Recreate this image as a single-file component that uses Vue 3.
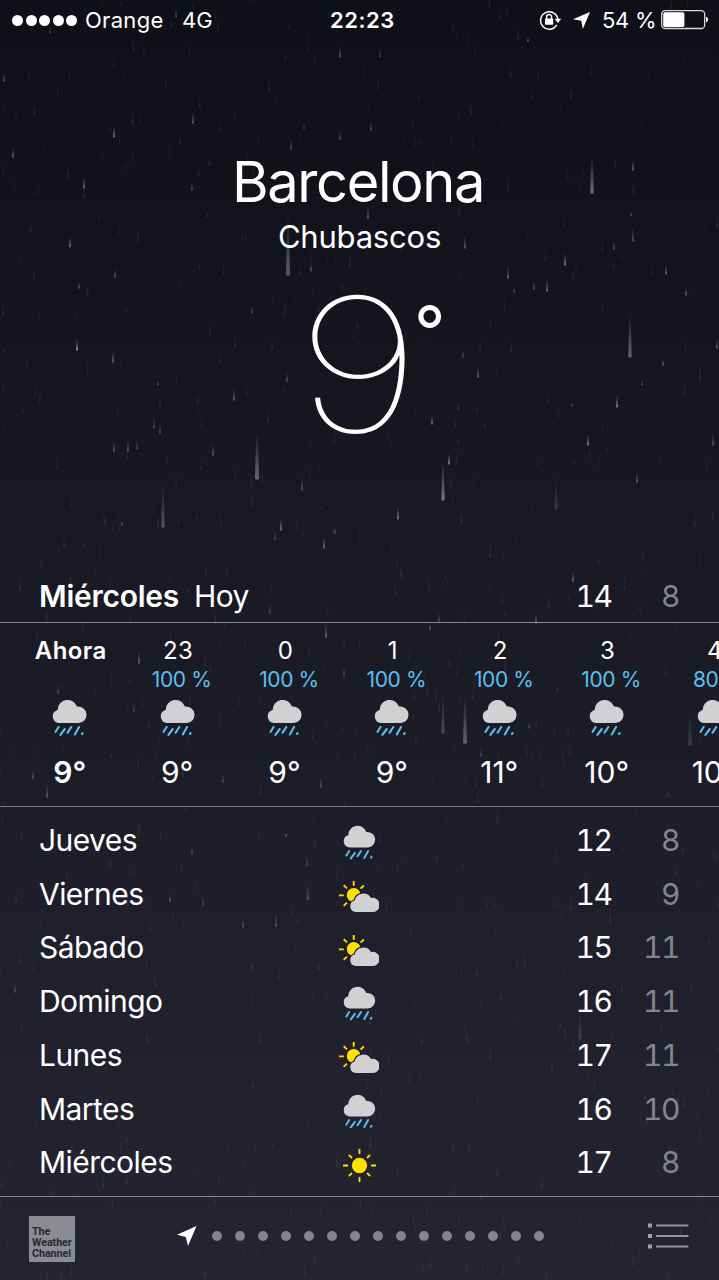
<script setup>
const hours = [
  { label: 'Ahora', rain: '', temp: '9', now: true },
  { label: '23', rain: '100 %', temp: '9' },
  { label: '0', rain: '100 %', temp: '9' },
  { label: '1', rain: '100 %', temp: '9' },
  { label: '2', rain: '100 %', temp: '11' },
  { label: '3', rain: '100 %', temp: '10' },
  { label: '4', rain: '80 %', temp: '10' },
]

const days = [
  { name: 'Jueves', icon: 'rain', high: 12, low: 8 },
  { name: 'Viernes', icon: 'partly', high: 14, low: 9 },
  { name: 'Sábado', icon: 'partly', high: 15, low: 11 },
  { name: 'Domingo', icon: 'rain', high: 16, low: 11 },
  { name: 'Lunes', icon: 'partly', high: 17, low: 11 },
  { name: 'Martes', icon: 'rain', high: 16, low: 10 },
  { name: 'Miércoles', icon: 'sun', high: 17, low: 8 },
]

// Foreground drops: x, bottom y, length, width, opacity
const nearDrops = [
  [288, 276, 62, 4.4, 0.32], [257, 480, 48, 4.6, 0.36], [163, 528, 44, 3.8, 0.26],
  [592, 194, 40, 3.8, 0.42], [630, 358, 46, 3.8, 0.36], [443, 501, 40, 3.8, 0.42],
  [556, 510, 34, 3.4, 0.16], [465, 744, 50, 4.4, 0.32], [443, 734, 42, 3.4, 0.22],
  [690, 746, 34, 4.4, 0.14], [580, 1040, 30, 4, 0.14],
  [340, 58, 14, 1.6, 0.4], [4, 82, 10, 1.5, 0.4], [193, 124, 12, 1.6, 0.5],
  [114, 138, 13, 1.7, 0.6], [13, 158, 11, 1.7, 0.5], [84, 189, 13, 1.7, 0.5],
  [192, 191, 9, 1.5, 0.4], [70, 248, 13, 1.7, 0.5], [115, 278, 10, 1.6, 0.4],
  [79, 289, 8, 1.6, 0.45], [77, 351, 13, 2, 0.6], [113, 363, 14, 1.6, 0.5],
  [234, 401, 14, 1.6, 0.45], [158, 386, 7, 1.4, 0.4], [287, 382, 10, 1.6, 0.4],
  [154, 429, 14, 1.5, 0.35], [160, 434, 12, 1.5, 0.35], [114, 452, 12, 1.7, 0.4],
  [128, 452, 12, 1.7, 0.4], [137, 450, 12, 1.5, 0.3], [213, 456, 13, 1.5, 0.4],
  [302, 491, 14, 1.6, 0.4], [122, 526, 7, 1.5, 0.4], [281, 531, 14, 1.7, 0.55],
  [324, 549, 14, 1.7, 0.5], [335, 534, 7, 1.5, 0.4], [275, 541, 12, 1.4, 0.3],
  [340, 140, 9, 1.6, 0.4], [291, 150, 12, 1.6, 0.35], [311, 272, 11, 1.7, 0.4],
  [252, 314, 10, 1.4, 0.35], [304, 130, 12, 1.4, 0.25],
  [380, 58, 12, 1.5, 0.3], [528, 42, 5, 1.6, 0.55], [371, 131, 10, 1.5, 0.4],
  [633, 171, 12, 1.7, 0.5], [368, 219, 14, 1.8, 0.4], [465, 249, 16, 1.6, 0.4],
  [633, 242, 17, 1.5, 0.4], [631, 216, 4, 1.6, 0.5], [614, 250, 11, 1.6, 0.35],
  [565, 266, 14, 1.8, 0.55], [508, 279, 13, 1.6, 0.5], [534, 290, 10, 1.6, 0.4],
  [547, 292, 15, 1.8, 0.45], [514, 293, 7, 1.7, 0.35], [666, 275, 11, 1.7, 0.5],
  [686, 296, 9, 1.6, 0.5], [663, 366, 8, 1.8, 0.4], [717, 349, 11, 1.7, 0.4],
  [478, 378, 12, 1.7, 0.45], [463, 358, 9, 1.5, 0.35], [617, 408, 14, 1.8, 0.6],
  [432, 425, 11, 1.8, 0.5], [588, 446, 12, 1.8, 0.6], [713, 446, 14, 1.6, 0.4],
  [449, 465, 12, 1.8, 0.6], [637, 483, 11, 1.6, 0.45], [398, 520, 14, 1.8, 0.55],
  [642, 386, 7, 1.5, 0.35], [572, 407, 6, 1.6, 0.35], [458, 410, 7, 1.4, 0.3],
  [176, 18, 12, 1.6, 0.3], [50, 34, 9, 1.5, 0.3], [139, 664, 13, 1.6, 0.5],
  [58, 694, 11, 1.6, 0.3], [326, 638, 16, 1.6, 0.5], [344, 676, 10, 1.5, 0.35],
  [134, 712, 9, 1.6, 0.3], [33, 779, 9, 1.6, 0.4], [47, 798, 15, 1.7, 0.4],
  [321, 788, 12, 1.6, 0.35], [223, 783, 10, 1.5, 0.3], [430, 630, 7, 1.6, 0.5],
  [536, 624, 10, 1.6, 0.6], [439, 622, 10, 1.6, 0.3], [573, 582, 12, 1.7, 0.5],
  [270, 614, 12, 1.5, 0.3], [529, 729, 7, 1.6, 0.3], [481, 757, 10, 1.5, 0.3],
  [170, 902, 9, 1.8, 0.35], [243, 928, 10, 1.8, 0.35], [276, 927, 14, 1.6, 0.35],
  [308, 900, 14, 1.8, 0.35], [286, 837, 5, 1.6, 0.5], [192, 855, 10, 1.5, 0.3],
  [307, 867, 14, 1.6, 0.25], [15, 993, 12, 1.5, 0.3], [203, 907, 14, 1.8, 0.2],
]

// Deterministic generator for the faint background rain
let seed = 48271
const random = () => {
  seed = (seed * 16807) % 2147483647
  return seed / 2147483647
}
const farDrops = Array.from({ length: 620 }, () => [
  random() * 719,
  random() * 1290,
  9 + random() * 8,
  1.6 + random() * 0.8,
  0.04 + random() * 0.06,
])

const drops = [...farDrops, ...nearDrops].map(([x, y, len, w, opacity]) => {
  const top = w * 0.18
  const bottom = w * 0.45
  return {
    d: `M${x - top} ${y - len}H${x + top}L${x + bottom} ${y - 1}Q${x} ${y + 0.6} ${x - bottom} ${y - 1}Z`,
    opacity,
  }
})
</script>

<template>
  <main class="screen">
    <svg class="sky" viewBox="0 0 719 1280" aria-hidden="true">
      <defs>
        <linearGradient id="drop" x1="0" y1="0" x2="0" y2="1">
          <stop offset="0" stop-color="#dfe3f0" stop-opacity="0" />
          <stop offset="0.75" stop-color="#eceef6" stop-opacity="0.8" />
          <stop offset="1" stop-color="#eceef6" />
        </linearGradient>
        <g id="rain-shape">
          <path
            fill="#d1d1d3"
            d="M6.9 24.1A6.7 6.7 0 0 1 5.6 11A10 10 0 0 1 25 7.5A8.35 8.35 0 1 1 26.7 24.1Z"
          />
          <path
            fill="none"
            stroke="#5ac0f0"
            stroke-width="2.1"
            stroke-linecap="round"
            d="M6.6 28L3.6 32.8M12.8 30L8.4 35.8M19.3 28L15.6 33.6M27 28L22.8 35.4M30.6 34.2L30 35"
          />
        </g>
      </defs>
      <path v-for="(drop, i) in drops" :key="i" :d="drop.d" :opacity="drop.opacity" fill="url(#drop)" />
    </svg>

    <header class="status">
      <div class="signal"><i v-for="n in 5" :key="n"></i></div>
      <span class="carrier">Orange</span>
      <span class="network">4G</span>
      <span class="clock">22:23</span>
      <svg class="lock" viewBox="0 0 23 20">
        <path d="M17.8 14.9A8.7 8.7 0 1 1 18.9 9.2" fill="none" stroke="#fff" stroke-width="1.5" />
        <path d="M15.6 8.8h6.6l-3.3 4.2z" fill="#fff" />
        <rect x="6" y="8.6" width="8.2" height="6.2" rx="0.8" fill="#fff" />
        <path d="M7.6 9V7a2.5 2.5 0 0 1 5 0v2" fill="none" stroke="#fff" stroke-width="1.4" />
      </svg>
      <svg class="locate" viewBox="0 0 17 17"><path d="M17 0L9.8 17L8.3 8.7L0 7.2Z" fill="#fff" /></svg>
      <span class="percent">54 %</span>
      <svg class="battery" viewBox="0 0 48 20">
        <rect x="0.7" y="0.7" width="43" height="17.8" rx="3.5" fill="none" stroke="#d8d8dc" stroke-width="1.3" />
        <rect x="2.2" y="2.2" width="21.2" height="14.8" rx="1.8" fill="#fff" />
        <path d="M45 6.5a3.2 3.2 0 0 1 0 6z" fill="#fff" />
      </svg>
    </header>

    <section class="current">
      <h1>Barcelona</h1>
      <p class="condition">Chubascos</p>
      <div class="temperature"><span class="digit">9</span><span class="degree">°</span></div>
    </section>

    <section class="today">
      <strong>Miércoles</strong>
      <span class="hoy">Hoy</span>
      <span class="high">14</span>
      <span class="low">8</span>
    </section>

    <section class="hours">
      <div v-for="hour in hours" :key="hour.label" class="hour" :class="{ now: hour.now }">
        <span class="time">{{ hour.label }}</span>
        <span class="chance">{{ hour.rain }}</span>
        <svg class="hour-icon" viewBox="0 0 35 37"><use href="#rain-shape" /></svg>
        <span class="temp">{{ hour.temp }}°</span>
      </div>
    </section>

    <section class="days">
      <div v-for="day in days" :key="day.name" class="day">
        <span class="name">{{ day.name }}</span>
        <span class="icon">
          <svg v-if="day.icon === 'rain'" class="rain" width="32.6" height="34.5" viewBox="0 0 35 37"><use href="#rain-shape" /></svg>
          <svg v-else-if="day.icon === 'partly'" width="40" height="31" viewBox="0 0 40 31">
            <g stroke="#ffe000" stroke-width="1.9" fill="none">
              <path d="M14.7 0v4.8M0 14.4h4.8M4.7 4.2L7.9 7.4M24.8 4.5L21.6 7.7M4.7 24.8L7.9 21.6" />
            </g>
            <circle cx="14.7" cy="14" r="6.9" fill="#ffe000" />
            <path
              fill="#d1d1d3"
              stroke="#1e1e29"
              stroke-width="2.4"
              paint-order="stroke"
              d="M16.8 31A5.8 5.8 0 0 1 15.6 19.6A8.9 8.9 0 0 1 32 17A7.1 7.1 0 1 1 33 31Z"
            />
          </svg>
          <svg v-else width="33" height="33" viewBox="0 0 33 33">
            <circle cx="16.5" cy="16.5" r="7.7" fill="#ffe000" />
            <path
              stroke="#ffe000"
              stroke-width="1.8"
              d="M16.5 0v5M16.5 28v5M0 16.5h5M28 16.5h5M5.8 5.8L9 9M24 24L27.2 27.2M27.2 5.8L24 9M9 24L5.8 27.2"
            />
          </svg>
        </span>
        <span class="high">{{ day.high }}</span>
        <span class="low">{{ day.low }}</span>
      </div>
    </section>

    <footer class="footer">
      <div class="logo">The<br />Weather<br />Channel</div>
      <div class="pages">
        <svg viewBox="0 0 20 20"><path d="M19.5 0L11 20L8.8 11L0 8.7Z" fill="#fff" /></svg>
        <i v-for="n in 15" :key="n"></i>
      </div>
      <svg class="list" viewBox="0 0 41 26">
        <path d="M0 2.5h4M0 13h4M0 23.5h4" stroke="#a0a0a8" stroke-width="4" />
        <path d="M8 2.5h32.5M8 13h32.5M8 23.5h32.5" stroke="#92929b" stroke-width="2" />
      </svg>
    </footer>
  </main>
</template>

<style>
html,
body {
  margin: 0;
  background: #101019;
}
</style>

<style scoped>
.screen {
  position: relative;
  display: flex;
  flex-direction: column;
  width: 719px;
  height: 1280px;
  overflow: hidden;
  color: #fff;
  font-family: Inter, "Liberation Sans", sans-serif;
  font-weight: 400;
  white-space: nowrap;
  background: linear-gradient(#0f0f18 0, #14141e 300px, #1a1a24 620px, #1d1e29 860px, #242530 1280px);
}
.screen > * {
  position: relative;
  box-sizing: border-box;
  flex: none;
}
.screen > .sky {
  position: absolute;
  inset: 0;
  width: 719px;
  height: 1280px;
}
.status {
  display: grid;
  grid-template-columns: 73px 97px 148px 209px 34px 29px 59px 48px;
  align-items: center;
  height: 40px;
  padding-left: 12px;
  font-size: 22px;
}
.signal {
  display: flex;
  gap: 2.5px;
}
.signal i {
  width: 11px;
  height: 11px;
  border-radius: 50%;
  background: #fff;
}
.carrier {
  letter-spacing: 0.3px;
}
.percent {
  letter-spacing: -0.25px;
}
.clock {
  font-weight: 600;
  letter-spacing: 0.5px;
}
.lock {
  width: 23px;
  height: 20px;
}
.locate {
  width: 17px;
  height: 17px;
}
.battery {
  width: 48px;
  height: 20px;
}
.current {
  height: 535px;
  text-align: center;
}
h1 {
  margin: 107px 3px 0 0;
  font-size: 56px;
  line-height: 70px;
  font-weight: 400;
  letter-spacing: -1.4px;
}
.condition {
  margin: 0;
  line-height: 39px;
  font-size: 31px;
  letter-spacing: -0.2px;
}
.temperature {
  display: flex;
  height: 200px;
  padding-left: 303px;
}
.digit {
  width: 111px;
  font-size: 190px;
  line-height: 218px;
  font-weight: 125;
  transform: scale(1.155, 0.98);
}
.degree {
  font-size: 69px;
  line-height: 150px;
}
.today {
  display: flex;
  align-items: center;
  height: 48px;
  padding: 0 38px 6px 39px;
  font-size: 30px;
  border-bottom: 1px solid #868690;
}
.today strong {
  width: 155px;
  font-weight: 600;
  letter-spacing: -0.25px;
}
.hoy {
  letter-spacing: -0.6px;
}
.high,
.low {
  font-variant-numeric: tabular-nums;
  letter-spacing: -1.5px;
}
.high {
  margin-left: auto;
  padding-right: 1.5px;
}
.low {
  width: 68px;
  box-sizing: border-box;
  padding-right: 2px;
  text-align: right;
  color: #85858d;
}
.hours {
  display: flex;
  height: 184px;
  padding-left: 16px;
  border-bottom: 1px solid #74747e;
  overflow: hidden;
}
.hour {
  display: flex;
  flex: none;
  flex-direction: column;
  align-items: center;
  width: 107.4px;
  padding-top: 13px;
  box-sizing: border-box;
}
.time {
  padding-left: 2px;
  font-size: 24px;
  line-height: 30px;
  letter-spacing: 0.4px;
}
.chance {
  height: 28px;
  padding-left: 9px;
  font-size: 21px;
  line-height: 28px;
  letter-spacing: -0.4px;
  color: #5ac0f0;
}
.hour-icon {
  width: 35px;
  height: 37px;
  margin-top: 5px;
}
.temp {
  margin-top: 16px;
  font-size: 30px;
  line-height: 40px;
}
.now .time,
.now .temp {
  font-weight: 600;
}
.days {
  height: 389px;
  padding: 6px 38px 0 39px;
}
.day {
  display: grid;
  grid-template-columns: 300px 40px 234px 68px;
  align-items: center;
  height: 53.75px;
  font-size: 30px;
}
.name {
  letter-spacing: -0.55px;
}
.day .icon {
  display: flex;
  justify-content: center;
  padding-top: 6px;
}
.rain {
  margin: -1px 0 0 1px;
}
.day .high {
  text-align: right;
}
.footer {
  display: flex;
  height: 84px;
  padding: 19px 30px 0 29px;
  border-top: 1px solid #868690;
}
.logo {
  width: 46px;
  height: 46px;
  padding: 11px 0 0 3px;
  box-sizing: border-box;
  background: #8b8b92;
  color: #262733;
  font: 700 10.8px/10.8px Roboto, sans-serif;
  letter-spacing: -0.1px;
}
.pages {
  display: flex;
  align-items: center;
  gap: 13px;
  height: 40px;
  margin-left: 102px;
}
.pages svg {
  width: 20px;
  height: 20px;
  margin-right: 2px;
}
.pages i {
  width: 10px;
  height: 10px;
  border-radius: 50%;
  background: #84848b;
}
.list {
  width: 41px;
  height: 26px;
  margin: 7px 0 0 auto;
}
</style>
